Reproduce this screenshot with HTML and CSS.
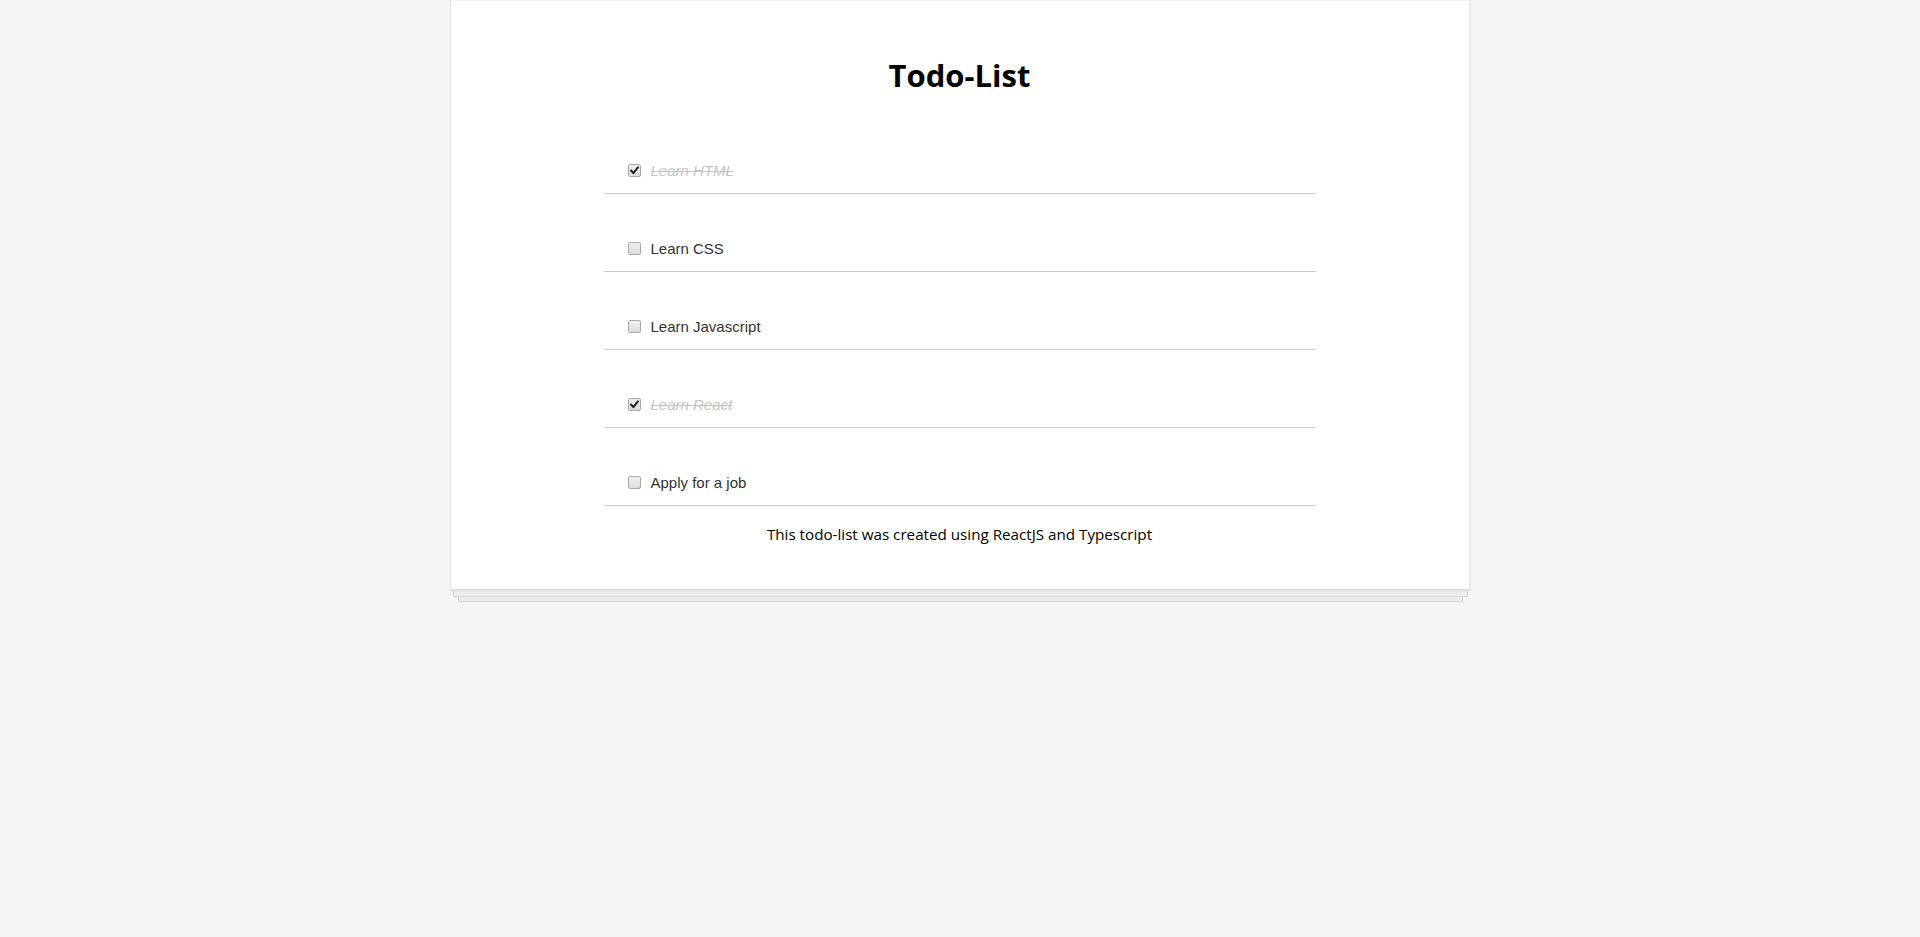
FILE: index.html
```html
<!DOCTYPE html>
<html lang="en">
<head>
<meta charset="utf-8">
<title>Todo-List</title>
<link rel="stylesheet" href="styles.css">
</head>
<body>
<div class="stack">
  <main class="card">
    <h1 class="title">Todo-List</h1>
    <ul class="todos">
      <li class="todo done">
        <span class="box"><svg viewBox="0 0 13 13" width="13" height="13"><path d="M3 6.5 L5.4 9.2 L10 3.4" fill="none" stroke="#222" stroke-width="2" stroke-linecap="round" stroke-linejoin="round"/></svg></span>
        <span class="label">Learn HTML</span>
      </li>
      <li class="todo">
        <span class="box"></span>
        <span class="label">Learn CSS</span>
      </li>
      <li class="todo">
        <span class="box"></span>
        <span class="label">Learn Javascript</span>
      </li>
      <li class="todo done">
        <span class="box"><svg viewBox="0 0 13 13" width="13" height="13"><path d="M3 6.5 L5.4 9.2 L10 3.4" fill="none" stroke="#222" stroke-width="2" stroke-linecap="round" stroke-linejoin="round"/></svg></span>
        <span class="label">Learn React</span>
      </li>
      <li class="todo">
        <span class="box"></span>
        <span class="label">Apply for a job</span>
      </li>
    </ul>
    <p class="footer">This todo-list was created using ReactJS and Typescript</p>
  </main>
  <div class="sheet sheet-1"></div>
  <div class="sheet sheet-2"></div>
</div>
</body>
</html>
```
FILE: styles.css
```css
html, body {
  margin: 0;
  padding: 0;
}
body {
  background: #f4f4f4;
  font-family: "Open Sans", "Noto Sans", sans-serif;
  color: #000;
}
.stack {
  width: 1021px;
  margin: 0 auto;
}
.sheet {
  box-sizing: border-box;
  background: #ececec;
  border: 1px solid #d4d4d4;
  border-top: none;
}
.sheet-1 {
  height: 6px;
  margin: 0 3px;
}
.sheet-2 {
  height: 5px;
  margin: 0 8px;
}
.card {
  display: block;
  box-sizing: border-box;
  width: 100%;
  background: #fff;
  border: 1px solid #e4e4e4;
  border-top-color: #f0f0f0;
  border-right: 2px solid #e8e8e8;
  border-bottom: 2px solid #dedede;
  padding: 54px 0 45px;
}
.title {
  margin: 0 0 21px;
  text-align: center;
  font-size: 31px;
  line-height: 40px;
  font-weight: 700;
}
.todos {
  list-style: none;
  margin: 0 auto;
  padding: 0;
  width: 712px;
}
.todo {
  display: flex;
  align-items: center;
  height: 77px;
  box-sizing: content-box;
  padding: 0 0 0 24px;
  border-bottom: 1px solid #cccccc;
  font-family: "Liberation Sans", Arial, sans-serif;
  font-size: 15px;
  color: #333;
}
.todo .box {
  flex: none;
  box-sizing: border-box;
  width: 13px;
  height: 13px;
  margin: 32px 10px 0 0;
  border: 1px solid #a9a9a9;
  border-radius: 2px;
  background: linear-gradient(#f0f0f0, #dcdcdc);
  display: flex;
}
.todo .box svg {
  margin: -1px;
}
.todo .label {
  margin-top: 32px;
  line-height: 17px;
}
.todo.done .label {
  color: #c4c4c4;
  font-style: italic;
  text-decoration: line-through;
}
.footer {
  margin: 18px 0 0;
  text-align: center;
  font-size: 15.2px;
  line-height: 20px;
}
```
